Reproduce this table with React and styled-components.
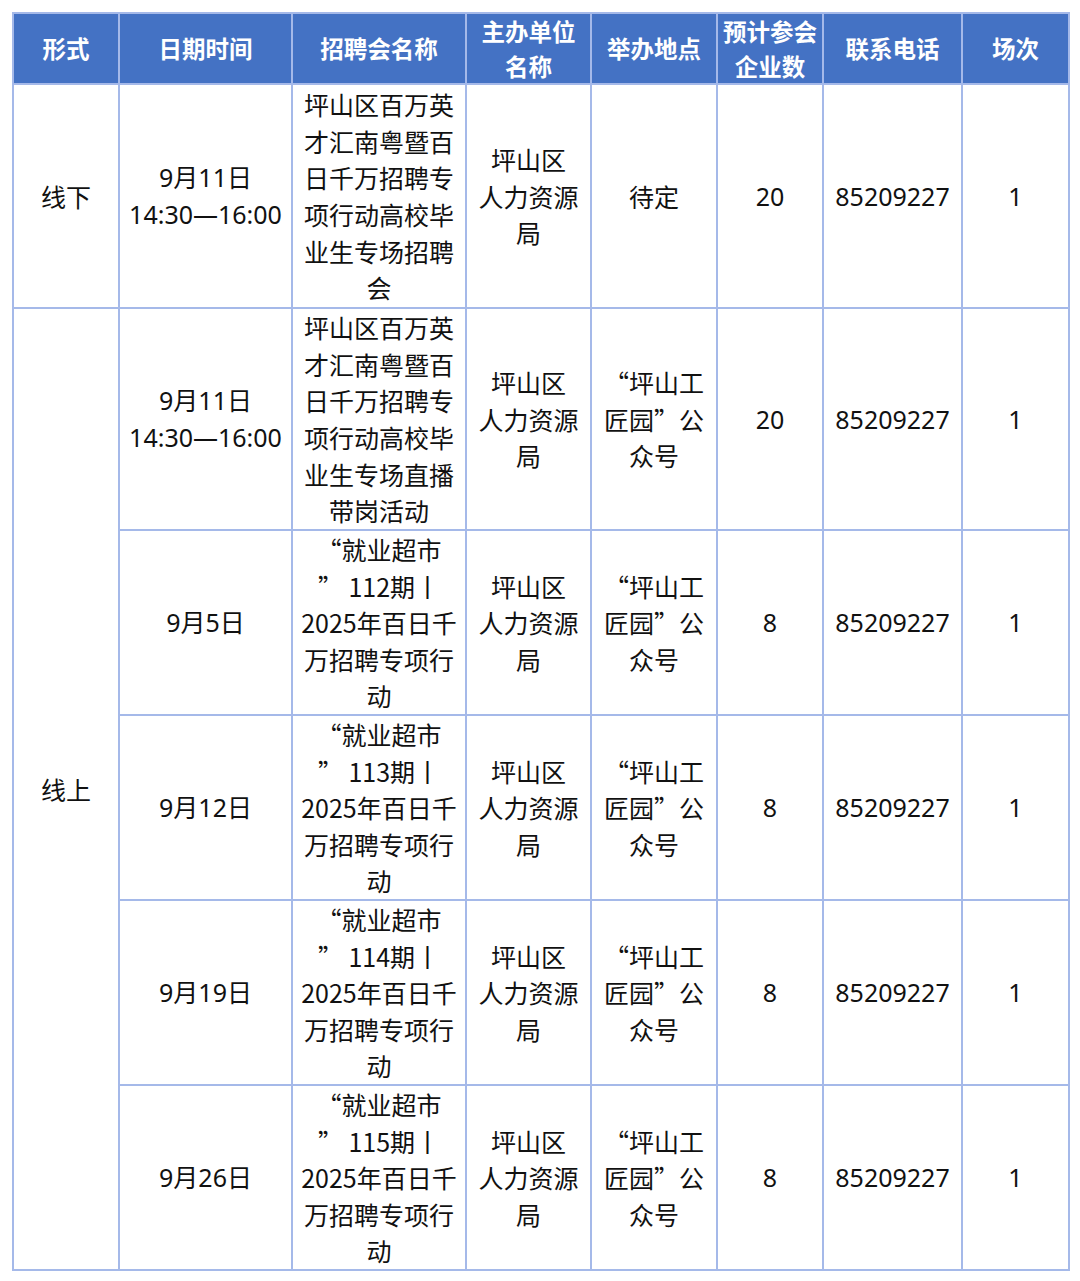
import React from "react";
import styled, { createGlobalStyle } from "styled-components";

const GlobalStyle = createGlobalStyle`
  html, body {
    margin: 0;
    padding: 0;
    background: #ffffff;
  }
  body {
    font-family: "Noto Sans CJK SC", "Noto Sans", "Liberation Sans", sans-serif;
  }
`;

const columns = [106, 173, 174, 125, 126, 106, 139, 107];

const headers = [
  ["形式"],
  ["日期时间"],
  ["招聘会名称"],
  ["主办单位", "名称"],
  ["举办地点"],
  ["预计参会", "企业数"],
  ["联系电话"],
  ["场次"],
];

const host = ["坪山区", "人力资源", "局"];
const online = ["“坪山工", "匠园”公", "众号"];

const rows = [
  {
    mode: "线下",
    span: 1,
    h: 222,
    date: ["9月11日", "14:30—16:00"],
    name: ["坪山区百万英", "才汇南粤暨百", "日千万招聘专", "项行动高校毕", "业生专场招聘", "会"],
    place: ["待定"],
    count: "20",
  },
  {
    mode: "线上",
    span: 5,
    h: 220,
    date: ["9月11日", "14:30—16:00"],
    name: ["坪山区百万英", "才汇南粤暨百", "日千万招聘专", "项行动高校毕", "业生专场直播", "带岗活动"],
    place: online,
    count: "20",
  },
  { h: 183, date: ["9月5日"], name: ["“就业超市", "” 112期丨", "2025年百日千", "万招聘专项行", "动"], place: online, count: "8" },
  { h: 183, date: ["9月12日"], name: ["“就业超市", "” 113期丨", "2025年百日千", "万招聘专项行", "动"], place: online, count: "8" },
  { h: 183, date: ["9月19日"], name: ["“就业超市", "” 114期丨", "2025年百日千", "万招聘专项行", "动"], place: online, count: "8" },
  { h: 183, date: ["9月26日"], name: ["“就业超市", "” 115期丨", "2025年百日千", "万招聘专项行", "动"], place: online, count: "8" },
];

const Page = styled.div`
  padding: 12px 12px 11px 12px;
`;

const Table = styled.table`
  border-collapse: collapse;
  table-layout: fixed;
  width: 1056px;
`;

const HeadCell = styled.th`
  background: #4472c4;
  color: #ffffff;
  font-weight: 700;
  font-size: 23.5px;
  line-height: 34.5px;
  height: 69px;
  padding: 0;
  text-align: center;
  vertical-align: middle;
  border: 2px solid #a5b9e9;
`;

const Cell = styled.td`
  color: #111111;
  font-family: ${(p) =>
    p.$latin
      ? `"Noto Sans", "Noto Sans CJK SC", sans-serif`
      : `"Noto Sans CJK SC", "Noto Sans", sans-serif`};
  font-size: 25px;
  line-height: 36.6px;
  padding: 0;
  text-align: center;
  vertical-align: middle;
  border: 2px solid #a5b9e9;
  height: ${(p) => p.$h}px;
`;

const Line = styled.span`
  display: block;
  white-space: nowrap;
`;

const Lines = ({ items }) => items.map((t, i) => <Line key={i}>{t}</Line>);

const App = () => {
  return (
    <Page>
      <GlobalStyle />
      <Table>
        <colgroup>
          {columns.map((w, i) => (
            <col key={i} style={{ width: w }} />
          ))}
        </colgroup>
        <thead>
          <tr>
            {headers.map((h, i) => (
              <HeadCell key={i}>
                <Lines items={h} />
              </HeadCell>
            ))}
          </tr>
        </thead>
        <tbody>
          {rows.map((r, i) => (
            <tr key={i}>
              {r.mode && (
                <Cell rowSpan={r.span} $h={r.h}>
                  {r.mode}
                </Cell>
              )}
              <Cell $h={r.h} $latin>
                <Lines items={r.date} />
              </Cell>
              <Cell $h={r.h}>
                <Lines items={r.name} />
              </Cell>
              <Cell $h={r.h}>
                <Lines items={host} />
              </Cell>
              <Cell $h={r.h}>
                <Lines items={r.place} />
              </Cell>
              <Cell $h={r.h} $latin>
                {r.count}
              </Cell>
              <Cell $h={r.h} $latin>
                85209227
              </Cell>
              <Cell $h={r.h} $latin>
                1
              </Cell>
            </tr>
          ))}
        </tbody>
      </Table>
    </Page>
  );
};

export default App;
